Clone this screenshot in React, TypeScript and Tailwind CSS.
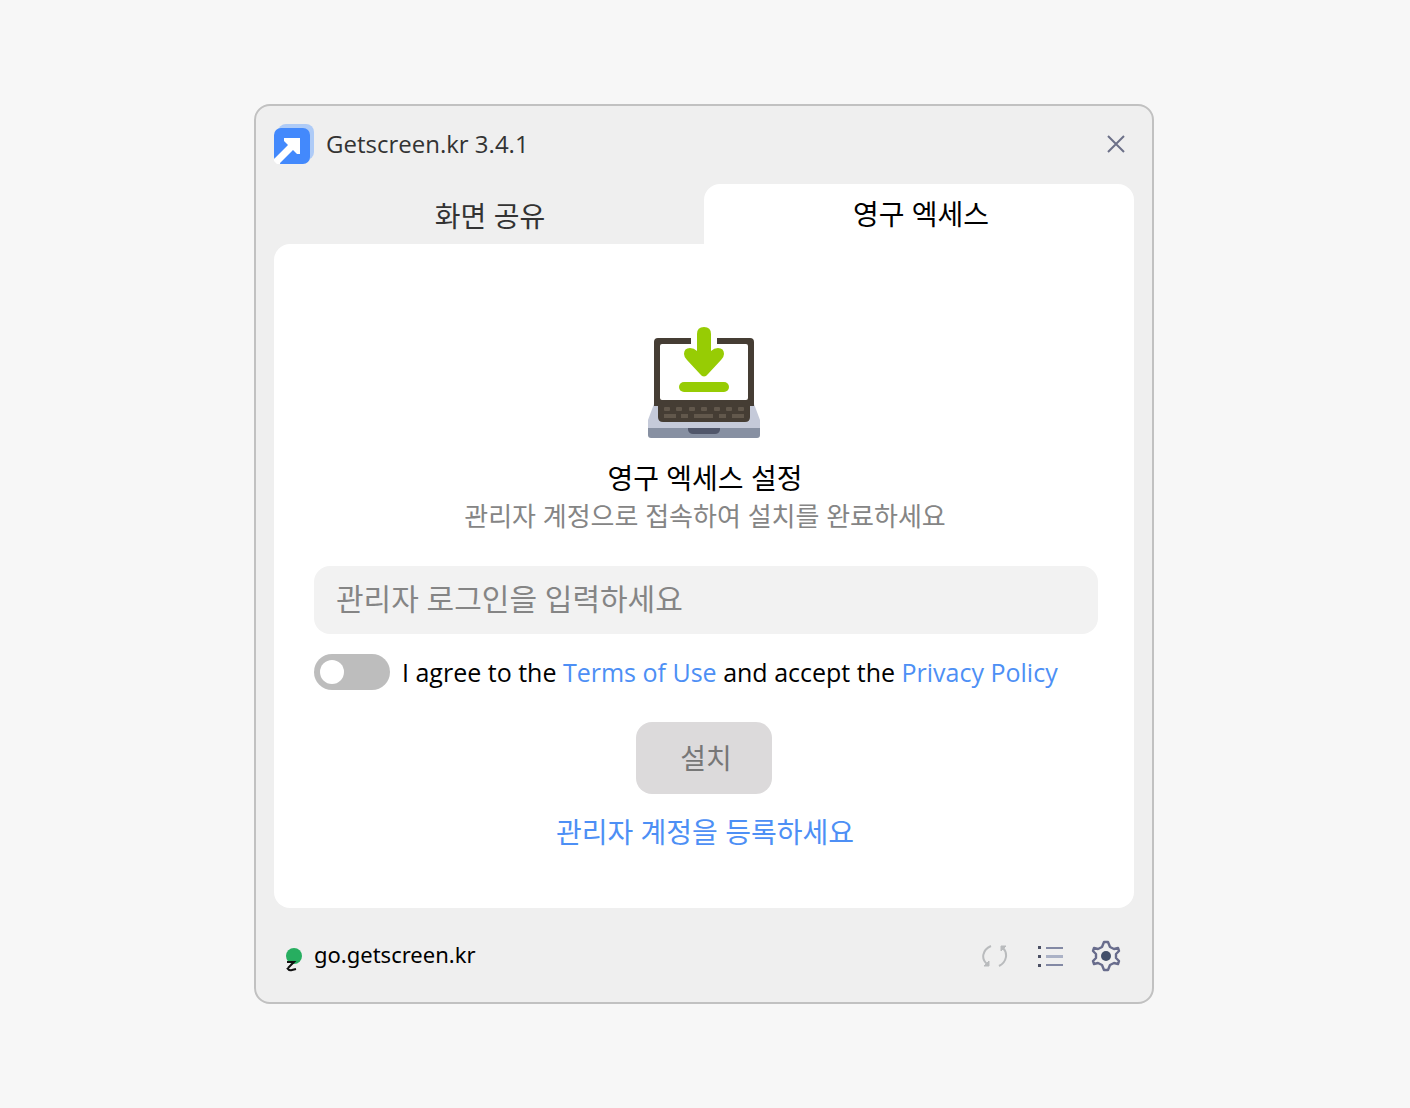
import type { ReactNode } from "react"

function Logo() {
  return (
    <svg width="40" height="40" viewBox="0 0 40 40" aria-hidden="true">
      <rect x="4" width="36" height="36" rx="8" fill="#aecbf7" />
      <rect y="4" width="36" height="36" rx="7" fill="#4389fc" />
      <path d="M0 35 14 21 10 17V14H26V30H23L19 26 6 39V40H3L0 37Z" fill="#fff" />
    </svg>
  )
}

function LaptopDownload() {
  const keys = [
    [16, 6], [28, 6], [41, 6], [53, 6], [66, 6], [78, 6], [90, 6],
  ]
  return (
    <svg width="112" height="112" viewBox="0 0 112 112" aria-hidden="true">
      <path d="M6 78H106L112 94V102H0V94Z" fill="#c5cad9" />
      <path d="M43 12H10Q6 12 6 16V80H106V16Q106 12 102 12H69V18H98Q100 18 100 20V72Q100 74 98 74H14Q12 74 12 72V20Q12 18 14 18H43Z" fill="#453d34" />
      <path d="M10 78H102V91Q102 96 97 96H15Q10 96 10 91Z" fill="#453d34" />
      {keys.map(([x, w]) => (
        <rect key={x} x={x} y="81" width={w} height="4" rx="1" fill="#62584c" />
      ))}
      <path d="M16 88H28V92H16ZM33 88H40V92H33ZM46 88H65V92H46ZM71 88H78V92H71ZM84 88H96V92H84Z" fill="#62584c" />
      <path d="M0 102H112V109Q112 112 109 112H3Q0 112 0 109Z" fill="#8790a2" />
      <path d="M40 102H72V104Q71 108 67 108H45Q41 108 40 104Z" fill="#50566a" />
      <path d="M49 8Q49 1 56 1T63 8V25Q66 22 70 22 76 22 76 28 76 31 73 34L60 48Q56 53 52 48L39 34Q36 31 36 28 36 22 42 22 46 22 49 25Z" fill="#97cc04" />
      <rect x="31" y="56" width="50" height="10" rx="5" fill="#97cc04" />
    </svg>
  )
}

function RefreshIcon() {
  return (
    <svg width="28" height="28" viewBox="0 0 28 28" fill="none" stroke="#b9bbbd" strokeWidth="2" aria-hidden="true">
      <path d="M9 4C0 8-1 17 5 22M17 24C25 20 26 11 21 6" />
      <path d="M2 24H7V19ZM24 4H19V9Z" fill="#b9bbbd" strokeWidth="1" />
    </svg>
  )
}

function ListIcon() {
  return (
    <svg width="28" height="28" viewBox="0 0 28 28" aria-hidden="true">
      <path d="M2 4H5V7H2ZM2 13H5V16H2ZM2 22H5V25H2Z" fill="#4c5064" />
      <path d="M10 5H27V7H10ZM10 22H27V24H10Z" fill="#8389a4" />
      <path d="M10 13H27V16H10Z" fill="#abb2c6" />
    </svg>
  )
}

function GearIcon() {
  return (
    <svg width="32" height="32" viewBox="0 0 32 32" fill="none" aria-hidden="true">
      <path d="M14 2H18L20 7 24 9 28 8 29 11 26 14V18L29 21 28 24 24 23 20 25 18 30H14L12 25 8 23 4 24 3 21 6 18V14L3 11 4 8 8 9 12 7Z" stroke="#686c8c" strokeWidth="2.4" strokeLinejoin="round" />
      <circle cx="16" cy="16" r="5" fill="#43506a" />
    </svg>
  )
}

function TextLink({ children }: { children: ReactNode }) {
  return (
    <a href="#" className="text-[#4d8ff5]">
      {children}
    </a>
  )
}

export default function App() {
  return (
    <div className="flex min-h-screen items-center justify-center bg-[#f7f7f7] pr-0.5 font-['Noto_Sans','Noto_Sans_CJK_KR',sans-serif] text-black">
      <div className="w-full max-w-[900px] rounded-2xl border-2 border-[#c1c1c1] bg-[#efefef] px-[18px]">
        {/* Title bar */}
        <header className="flex h-[78px] items-center gap-3 pb-0.5">
          <Logo />
          <h1 className="font-['Open_Sans',sans-serif] text-2xl text-[#333]">Getscreen.kr 3.4.1</h1>
          <button type="button" aria-label="Close" className="ml-auto p-2">
            <svg width="20" height="20" viewBox="0 0 20 20" stroke="#6c7088" strokeWidth="2" aria-hidden="true">
              <path d="M2 2 18 18M18 2 2 18" />
            </svg>
          </button>
        </header>

        {/* Tabs */}
        <div role="tablist" className="grid h-[60px] grid-cols-2 text-[28px]">
          <button type="button" role="tab" aria-selected="false" className="pt-1 pl-0.5 text-[#333]">
            화면 공유
          </button>
          <button type="button" role="tab" aria-selected="true" className="rounded-t-2xl bg-white pl-1">
            영구 엑세스
          </button>
        </div>

        {/* Install form */}
        <main className="flex flex-col items-center rounded-2xl rounded-tr-none bg-white pt-[82px] pb-[54px]">
          <LaptopDownload />
          <h2 className="mt-5 pl-0.5 text-[28px] leading-10">영구 엑세스 설정</h2>
          <p className="pl-0.5 text-[26px] leading-9 text-[#858585]">관리자 계정으로 접속하여 설치를 완료하세요</p>
          <div className="mt-8 w-full pr-9 pl-10">
            <input
              type="text"
              aria-label="관리자 로그인"
              placeholder="관리자 로그인을 입력하세요"
              className="h-[68px] w-full rounded-2xl bg-[#f2f2f2] px-[22px] pb-1 text-[30px] outline-none placeholder:text-[#858585]"
            />
            <div className="mt-5 flex items-center gap-3">
              <input
                id="agree"
                type="checkbox"
                className="h-9 w-[76px] shrink-0 appearance-none rounded-full bg-[#bdbdbd] before:m-1.5 before:block before:size-6 before:rounded-full before:bg-white"
              />
              <label htmlFor="agree" className="font-['Open_Sans',sans-serif] text-[25px] leading-9">
                I agree to the <TextLink>Terms of Use</TextLink> and accept the <TextLink>Privacy Policy</TextLink>
              </label>
            </div>
          </div>
          <button type="button" disabled className="mt-8 h-[72px] w-[136px] rounded-2xl bg-[#dcdadb] pl-1 text-[28px] text-[#777]">
            설치
          </button>
          <p className="mt-4 pl-0.5 text-[28px] leading-11">
            <TextLink>관리자 계정을 등록하세요</TextLink>
          </p>
        </main>

        {/* Status bar */}
        <footer className="flex h-[94px] items-center justify-between px-3 pt-0.5">
          <div className="flex items-center gap-3">
            <svg width="16" height="24" viewBox="0 0 16 24" className="mt-2" aria-hidden="true">
              <circle cx="8" cy="8" r="8" fill="#27ae60" />
              <path d="M1 14H8L2 20M1 20Q3 23 6 22L10 21" fill="none" stroke="#111" strokeWidth="2" />
            </svg>
            <span className="pb-1 text-[22px]">go.getscreen.kr</span>
          </div>
          <div className="flex items-center gap-[26px]">
            <button type="button" aria-label="Refresh">
              <RefreshIcon />
            </button>
            <button type="button" aria-label="List">
              <ListIcon />
            </button>
            <button type="button" aria-label="Settings">
              <GearIcon />
            </button>
          </div>
        </footer>
      </div>
    </div>
  )
}
